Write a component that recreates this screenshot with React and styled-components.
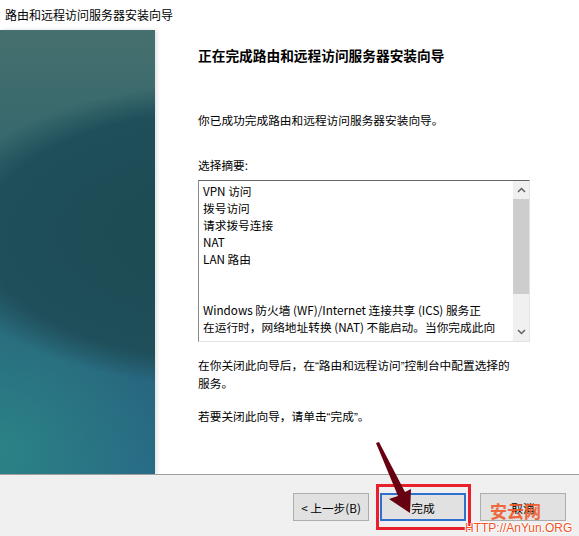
import React from 'react';
import styled, { createGlobalStyle } from 'styled-components';

const GlobalStyle = createGlobalStyle`
  html, body {
    margin: 0;
    padding: 0;
    background: #ffffff;
  }
  body {
    font-family: "Noto Sans CJK SC", "Liberation Sans", sans-serif;
    font-size: 12px;
    color: #000;
  }
`;

const summaryLines = [
  'VPN 访问',
  '拨号访问',
  '请求拨号连接',
  'NAT',
  'LAN 路由',
  '',
  '',
  'Windows 防火墙 (WF)/Internet 连接共享 (ICS) 服务正',
  '在运行时，网络地址转换 (NAT) 不能启动。当你完成此向',
];

const App = () => {
  return (
    <>
      <GlobalStyle />
      <Window>
        <TitleBar>路由和远程访问服务器安装向导</TitleBar>

        <Main>
          <SidePanel />
          <Content>
            <Heading>正在完成路由和远程访问服务器安装向导</Heading>
            <Text $top={47}>你已成功完成路由和远程访问服务器安装向导。</Text>
            <Text $top={28}>选择摘要:</Text>

            <ListBox>
              <ListLines>
                {summaryLines.map((line, i) => (
                  <Line key={i}>{line || '\u00a0'}</Line>
                ))}
              </ListLines>
              <ScrollBar>
                <ScrollArrow>
                  <svg width="9" height="6" viewBox="0 0 9 6">
                    <path d="M1 5 L4.5 1.5 L8 5" fill="none" stroke="#606060" strokeWidth="1.5" />
                  </svg>
                </ScrollArrow>
                <Track>
                  <Thumb />
                </Track>
                <ScrollArrow>
                  <svg width="9" height="6" viewBox="0 0 9 6">
                    <path d="M1 1 L4.5 4.5 L8 1" fill="none" stroke="#606060" strokeWidth="1.5" />
                  </svg>
                </ScrollArrow>
              </ScrollBar>
            </ListBox>

            <Text $top={14}>
              在你关闭此向导后，在<Quote>“</Quote>路由和远程访问<Quote>”</Quote>控制台中配置选择的<br />服务。
            </Text>
            <Text $top={16}>
              若要关闭此向导，请单击<Quote>“</Quote>完成<Quote>”</Quote>。
            </Text>
          </Content>
        </Main>

        <Footer>
          <Button $width={76}>&lt; 上一步(B)</Button>
          <Button $width={86} $primary $gap={11}>完成</Button>
          <Button $width={86} $gap={14}>取消</Button>
        </Footer>

        {/* screenshot annotations */}
        <Highlight />
        <Arrow width="60" height="80" viewBox="0 0 60 80">
          <polygon points="1,2 4,1 30,51 36,48 35,72 14,58 23,55" fill="#670011" />
        </Arrow>
        <WmTitle>安云网</WmTitle>
        <WmUrl>HTTP://AnYun.ORG</WmUrl>
      </Window>
    </>
  );
};

const Window = styled.div`
  position: relative;
  width: 579px;
  height: 536px;
  display: flex;
  flex-direction: column;
  background: #fff;
  overflow: hidden;
`;

const TitleBar = styled.div`
  height: 30px;
  display: flex;
  align-items: center;
  padding-left: 5px;
  padding-bottom: 2px;
  box-sizing: border-box;
  font-size: 12px;
  color: #000;
  background: #fff;
`;

const Main = styled.div`
  display: flex;
  height: 444px;
`;

const SidePanel = styled.div`
  width: 155px;
  flex-shrink: 0;
  box-shadow: 2px 0 4px rgba(0, 0, 0, 0.12);
  background:
    radial-gradient(ellipse 300px 152px at 230px 205px, #1d4a52 0%, #1f4f5a 82%, rgba(31, 79, 90, 0) 100%),
    radial-gradient(ellipse 160px 160px at 0px 420px, #2b8285 0%, rgba(43, 130, 133, 0) 100%),
    linear-gradient(180deg, #46706f 0%, #3d6b6d 14%, #2d6470 45%, #28667e 75%, #286b86 100%);
`;

const Content = styled.div`
  flex: 1;
  display: flex;
  flex-direction: column;
  padding-left: 43px;
`;

const Heading = styled.div`
  margin-top: 16px;
  font-size: 13.7px;
  font-weight: bold;
  line-height: 18px;
  white-space: nowrap;
`;

const Text = styled.div`
  margin-top: ${p => p.$top}px;
  font-size: 11.7px;
  line-height: 17px;
  white-space: nowrap;
`;

const Quote = styled.span`
  font-family: "Liberation Sans", sans-serif;
`;

const ListBox = styled.div`
  margin-top: 7px;
  width: 332px;
  height: 162px;
  box-sizing: border-box;
  display: flex;
  border: 1px solid #e3e3e3;
  border-top-color: #646464;
  border-left-color: #8a8a8a;
  background: #fff;
`;

const ListLines = styled.div`
  flex: 1;
  padding: 1px 0 0 4px;
  overflow: hidden;
`;

const Line = styled.div`
  font-size: 11.7px;
  line-height: 17px;
  white-space: nowrap;
`;

const ScrollBar = styled.div`
  width: 16px;
  flex-shrink: 0;
  display: flex;
  flex-direction: column;
  background: #f0f0f0;
`;

const ScrollArrow = styled.div`
  height: 18px;
  display: flex;
  align-items: center;
  justify-content: center;
`;

const Track = styled.div`
  flex: 1;
`;

const Thumb = styled.div`
  height: 95px;
  background: #cdcdcd;
`;

const Footer = styled.div`
  flex: 1;
  display: flex;
  align-items: flex-start;
  justify-content: flex-end;
  padding: 18px 13px 0 0;
  border-top: 1px solid #a0a0a0;
  background: #f0f0f0;
`;

const Button = styled.div`
  width: ${p => p.$width}px;
  height: 28px;
  margin-left: ${p => p.$gap || 0}px;
  box-sizing: border-box;
  display: flex;
  align-items: center;
  justify-content: center;
  font-size: 11.7px;
  background: #e1e1e1;
  border: ${p => (p.$primary ? '2px solid #2f6fd0' : '1px solid #adadad')};
`;

const Highlight = styled.div`
  position: absolute;
  left: 376px;
  top: 484px;
  width: 95px;
  height: 46px;
  box-sizing: border-box;
  border: 3px solid #e8202c;
`;

const Arrow = styled.svg`
  position: absolute;
  left: 375px;
  top: 441px;
`;

const WmTitle = styled.div`
  position: absolute;
  left: 490px;
  top: 501px;
  font-family: "Noto Sans CJK SC", sans-serif;
  font-size: 17px;
  font-weight: bold;
  line-height: 20px;
  color: #f2531f;
  opacity: 0.85;
`;

const WmUrl = styled.div`
  position: absolute;
  left: 465px;
  top: 521px;
  font-family: "Liberation Sans", sans-serif;
  font-size: 12px;
  line-height: 14px;
  color: #f2531f;
  text-shadow: 1px 0 0 #fff, -1px 0 0 #fff, 0 1px 0 #fff, 0 -1px 0 #fff;
`;

export default App;
